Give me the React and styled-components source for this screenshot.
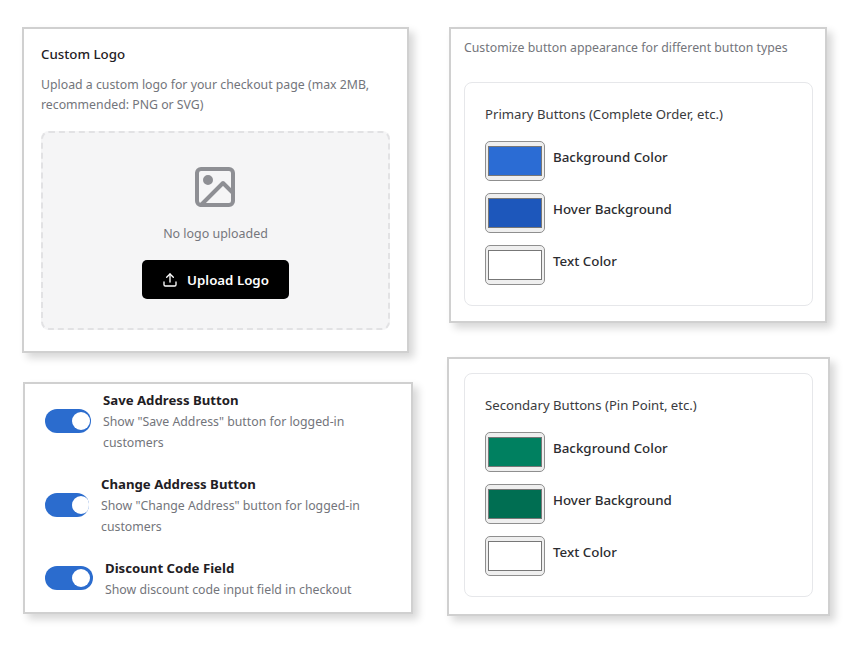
import React from "react";
import styled, { createGlobalStyle } from "styled-components";

const Global = createGlobalStyle`
  html, body { margin: 0; padding: 0; background: #fff; }
  body { font-family: "Noto Sans", "Open Sans", sans-serif; color: #1f1f1f; }
`;
const Page = styled.div`
  width: 857px; height: 646px; overflow: hidden; display: flex; align-items: flex-start;
  padding: 27px 0 0 22px; box-sizing: border-box;
`;
const Column = styled.div`
  display: flex; flex-direction: column; align-items: flex-start; width: ${p => p.$w}px; flex: none;
`;
const Card = styled.section`
  box-sizing: border-box; background: #fff; border: 2px solid #d0d0d0;
  box-shadow: 5px 5px 8px rgba(0,0,0,.16);
  width: ${p => p.$w}px; height: ${p => p.$h}px;
  margin: ${p => p.$m || "0"}; padding: ${p => p.$p};
`;
const CardTitle = styled.h3`
  margin: 0 0 11px; font-size: 13.3px; line-height: 20px; font-weight: 500; color: #1f2024;
`;
const Hint = styled.p`
  margin: 0; font-size: 12.3px; line-height: ${p => p.$lh || 20}px; color: #73757b;
`;
const DropZone = styled.div`
  box-sizing: border-box; margin-top: 16px; width: 349px; height: 199px; background: #f5f5f6;
  border: 2px dashed #e2e2e4; border-radius: 8px;
  display: flex; flex-direction: column; align-items: center; padding-top: 30px;
`;
const DropText = styled.p`
  margin: 13px 0 16px; font-size: 12.45px; line-height: 20px; color: #75777d;
`;
const UploadButton = styled.button`
  width: 147px; height: 39px; border: 0; border-radius: 5px; background: #000; color: #fff;
  display: flex; align-items: center; justify-content: center; gap: 9px;
  font: 600 13.3px "Noto Sans", sans-serif;
`;
const ToggleList = styled.div`display: flex; flex-direction: column; gap: 21px;`;
const ToggleRow = styled.div`display: flex; align-items: center; gap: 12px; width: 100%;`;
const Track = styled.div`
  position: relative; width: ${p => p.$w}px; height: 24px; flex: none; overflow: hidden;
  margin-bottom: 2px; background: #2b6cce; border-radius: 12px;
`;
const Knob = styled.span`
  position: absolute; top: 3px; left: 27px; width: 18px; height: 18px; border-radius: 50%; background: #fff;
`;
const ToggleTitle = styled.div`font-size: 13.2px; font-weight: 700; line-height: 21px; color: #1f2024;`;
const Group = styled.div`
  box-sizing: border-box; border: 1px solid #e6e7ea; border-radius: 8px; padding: 21px 20px 0;
  width: 349px; height: 224px; margin-top: ${p => p.$mt || 0}px;
`;
const GroupTitle = styled.h4`
  margin: 0 0 17px; font-size: 13.15px; line-height: 20px; font-weight: 400; color: #3a3b40;
`;
const ColorRow = styled.div`display: flex; gap: 8px; margin-bottom: 12px; align-items: flex-start;`;
const Swatch = styled.input`
  width: 60px; height: 40px; border: 1px solid #8f8f8f; border-radius: 5px; margin: 0; padding: 0 2px;
  display: block; box-sizing: border-box; background: #efefef;
  &::-webkit-color-swatch-wrapper { padding: 4px 0; }
  &::-webkit-color-swatch { border: 1px solid #777; border-radius: 0; }
`;
const ColorLabel = styled.label`font-size: 13.35px; font-weight: 500; line-height: 20px; padding-top: 6px; color: #2b2c30;`;
const PlaceholderSvg = styled.svg`margin-right: 1px; flex: none;`;

const ImageIcon = () => (
  <PlaceholderSvg width="48" height="48" viewBox="0 0 24 24" fill="none" stroke="#8e8f94" strokeWidth="2" strokeLinecap="round" strokeLinejoin="round">
    <rect x="3" y="3" width="18" height="18" rx="2" />
    <circle cx="8.5" cy="8.5" r="1.5" fill="#8e8f94" />
    <path d="M21 15l-5-5L5 21" />
  </PlaceholderSvg>
);
const UploadIcon = () => (
  <svg width="16" height="16" viewBox="0 0 24 24" fill="none" stroke="#fff" strokeWidth="2" strokeLinecap="round" strokeLinejoin="round">
    <path d="M21 15v4a2 2 0 0 1-2 2H5a2 2 0 0 1-2-2v-4" />
    <polyline points="17 8 12 3 7 8" />
    <line x1="12" y1="3" x2="12" y2="15" />
  </svg>
);
const Colors = ({ a, b }) => (
  <>
    {[["Background Color", a], ["Hover Background", b], ["Text Color", "#ffffff"]].map(([l, c]) => (
      <ColorRow key={l}>
        <Swatch type="color" defaultValue={c} />
        <ColorLabel>{l}</ColorLabel>
      </ColorRow>
    ))}
  </>
);
const toggles = [
  ["Save Address Button", 'Show "Save Address" button for logged-in customers', 46],
  ["Change Address Button", 'Show "Change Address" button for logged-in customers', 44],
  ["Discount Code Field", "Show discount code input field in checkout", 48],
];

export default function App() {
  return (
    <Page>
      <Global />
      <Column $w={425}>
        <Card $w={387} $h={326} $p="15px 0 0 17px">
          <CardTitle>Custom Logo</CardTitle>
          <Hint>Upload a custom logo for your checkout page (max 2MB, recommended: PNG or SVG)</Hint>
          <DropZone>
            <ImageIcon />
            <DropText>No logo uploaded</DropText>
            <UploadButton><UploadIcon />Upload Logo</UploadButton>
          </DropZone>
        </Card>
        <Card $w={390} $h={232} $m="29px 0 0 1px" $p="6px 20px 0">
          <ToggleList>
            {toggles.map(([t, d, w]) => (
              <ToggleRow key={t}>
                <Track $w={w}><Knob /></Track>
                <div>
                  <ToggleTitle>{t}</ToggleTitle>
                  <Hint $lh={21}>{d}</Hint>
                </div>
              </ToggleRow>
            ))}
          </ToggleList>
        </Card>
      </Column>
      <Column $w={385}>
        <Card $w={378} $h={296} $m="0 0 0 2px" $p="9px 13px 0">
          <Hint>Customize button appearance for different button types</Hint>
          <Group $mt={24}>
            <GroupTitle>Primary Buttons (Complete Order, etc.)</GroupTitle>
            <Colors a="#2b6cd4" b="#1d57bb" />
          </Group>
        </Card>
        <Card $w={383} $h={259} $m="34px 0 0" $p="14px 15px 0">
          <Group>
            <GroupTitle>Secondary Buttons (Pin Point, etc.)</GroupTitle>
            <Colors a="#008060" b="#006e52" />
          </Group>
        </Card>
      </Column>
    </Page>
  );
}
